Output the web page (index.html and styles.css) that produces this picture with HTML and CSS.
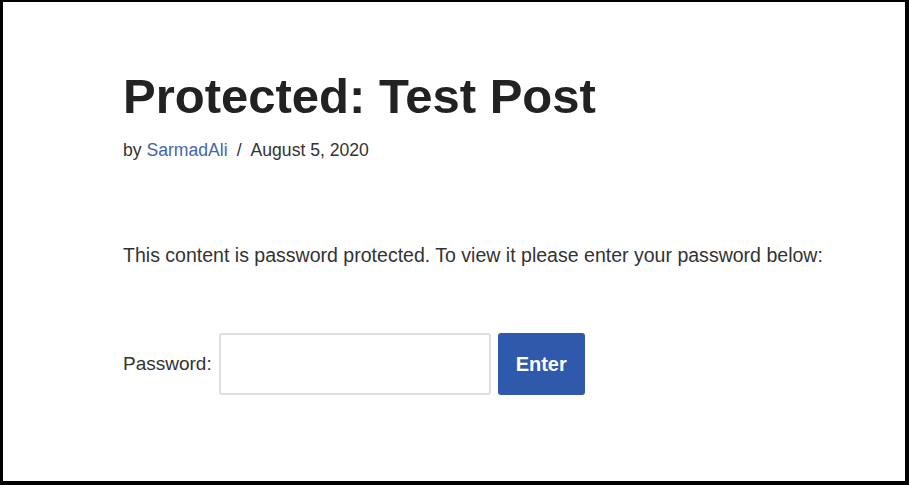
FILE: index.html
```html
<!DOCTYPE html>
<html>
<head>
<meta charset="utf-8">
<link rel="stylesheet" href="styles.css">
</head>
<body>
<div class="frame">
  <article class="post">
    <h1 class="title">Protected: Test Post</h1>
    <div class="meta">by <a class="author" href="#">SarmadAli</a><span class="sep">/</span>August 5, 2020</div>
    <p class="notice">This content is password protected. To view it please enter your password below:</p>
    <form class="pwform">
      <label class="label">Password:</label>
      <input class="input" type="password">
      <button class="btn" type="button">Enter</button>
    </form>
  </article>
</div>
</body>
</html>
```
FILE: styles.css
```css
html, body { margin: 0; padding: 0; background: #fff; }
body { font-family: "Liberation Sans", Arial, sans-serif; color: #333; }
.frame {
  box-sizing: border-box;
  width: 909px;
  height: 485px;
  border-style: solid;
  border-color: #000;
  border-width: 2px 4px 4px 3px;
  background: #fff;
}
.post { padding: 64px 0 0 120px; }
.title {
  margin: 0;
  font-size: 49px;
  font-weight: 700;
  line-height: 60px;
  color: #222;
}
.meta {
  margin-top: 14px;
  font-size: 17.6px;
  line-height: 20px;
  color: #333;
}
.author { color: #4467a4; text-decoration: none; }
.sep { margin: 0 9px; }
.notice {
  margin: 82px 0 0;
  font-size: 19.55px;
  line-height: 26px;
  color: #333;
}
.pwform {
  margin-top: 65px;
  display: flex;
  align-items: center;
}
.label { font-size: 19px; color: #333; margin-right: 7px; }
.input {
  box-sizing: border-box;
  width: 272px;
  height: 62px;
  border: 2px solid #dedede;
  border-radius: 3px;
  margin: 0 7px 0 0;
  padding: 0;
}
.btn {
  box-sizing: border-box;
  width: 87px;
  height: 62px;
  border: none;
  border-radius: 3px;
  background: #2f59ab;
  color: #fff;
  font-family: "Liberation Sans", Arial, sans-serif;
  font-weight: 700;
  font-size: 20px;
  padding: 0;
}
```
